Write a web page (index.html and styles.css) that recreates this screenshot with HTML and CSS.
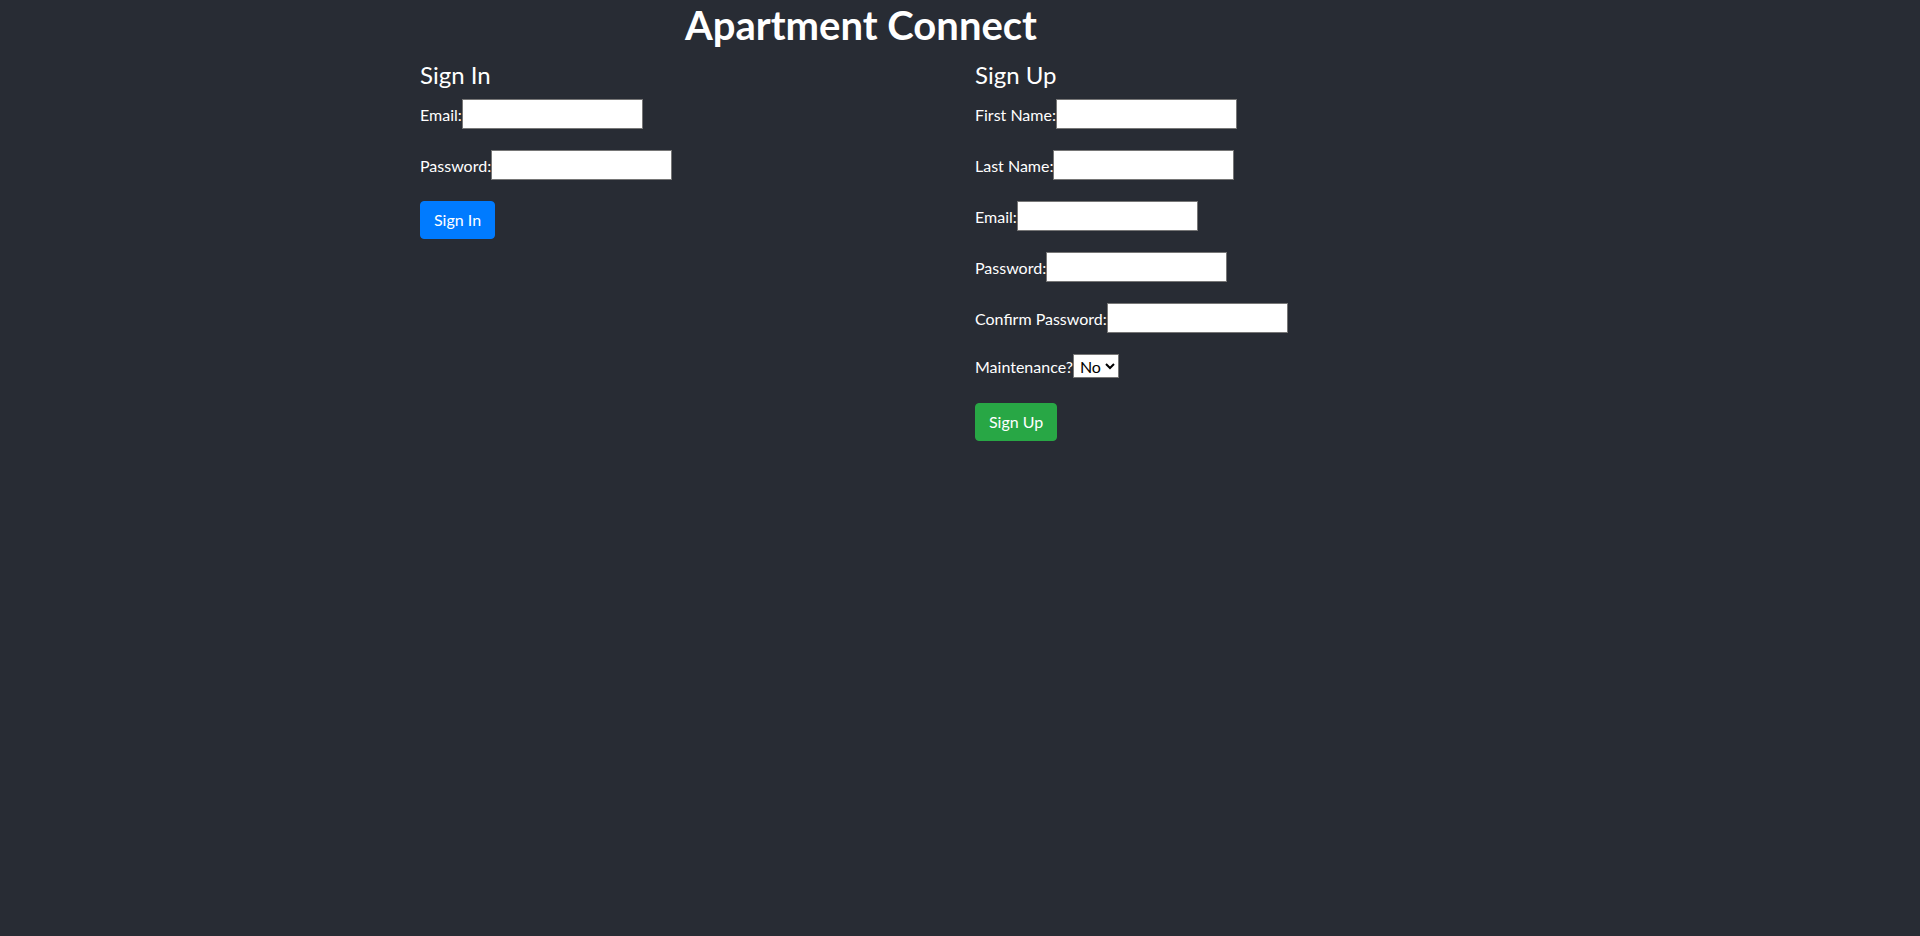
FILE: index.html
```html
<!DOCTYPE html>
<html lang="en">
<head>
<meta charset="utf-8">
<title>Apartment Connect</title>
<link rel="stylesheet" href="styles.css">
</head>
<body>
<div class="app">
  <h1 class="title">Apartment Connect</h1>
  <div class="columns">
    <form class="col col-left">
      <h4 class="heading">Sign In</h4>
      <div class="row"><label class="label">Email:</label><input class="field" type="email"></div>
      <div class="row"><label class="label">Password:</label><input class="field" type="password"></div>
      <button type="button" class="btn btn-blue">Sign In</button>
    </form>
    <form class="col col-right">
      <h4 class="heading">Sign Up</h4>
      <div class="row"><label class="label">First Name:</label><input class="field" type="text"></div>
      <div class="row"><label class="label">Last Name:</label><input class="field" type="text"></div>
      <div class="row"><label class="label">Email:</label><input class="field" type="email"></div>
      <div class="row"><label class="label">Password:</label><input class="field" type="password"></div>
      <div class="row"><label class="label">Confirm Password:</label><input class="field" type="password"></div>
      <div class="row row-select"><label class="label">Maintenance?</label><select class="choice"><option>No</option><option>Yes</option></select></div>
      <button type="button" class="btn btn-green">Sign Up</button>
    </form>
  </div>
</div>
</body>
</html>
```

FILE: styles.css
```css
html, body {
  margin: 0;
  padding: 0;
}
body {
  background: #282c34;
  color: #ffffff;
  font-family: Lato, "Open Sans", sans-serif;
  font-size: 16px;
  min-height: 936px;
}
.app {
  padding-left: 420px;
}
.title {
  width: 882px;
  margin: 0;
  padding-top: 4px;
  text-align: center;
  font-size: 40px;
  font-weight: 700;
  line-height: 42px;
}
.columns {
  display: flex;
  padding-top: 14px;
}
.col {
  display: flex;
  flex-direction: column;
  align-items: flex-start;
  margin: 0;
}
.col-left {
  width: 555px;
}
.heading {
  margin: 0 0 10px 0;
  font-size: 24px;
  font-weight: 400;
  line-height: 29px;
}
.row {
  display: flex;
  align-items: center;
  height: 30px;
  margin-bottom: 21px;
}
.row-select {
  height: 24px;
  margin-bottom: 25px;
}
.label {
  white-space: nowrap;
}
.field {
  box-sizing: border-box;
  width: 181px;
  height: 30px;
  margin: 0;
  padding: 1px 2px;
  border: 1px solid #767676;
  background: #ffffff;
  font: inherit;
}
.choice {
  box-sizing: border-box;
  width: 46px;
  height: 24px;
  margin: 0;
  padding: 0 0 0 2px;
  border: 1px solid #767676;
  background: #ffffff;
  color: #000000;
  font-family: inherit;
  font-size: 16px;
}
.btn {
  box-sizing: border-box;
  height: 38px;
  padding: 0 13px;
  border: 1px solid transparent;
  border-radius: 4px;
  color: #ffffff;
  font-family: inherit;
  font-size: 16px;
  line-height: 24px;
  cursor: pointer;
}
.btn-blue {
  background: #007bff;
  border-color: #007bff;
}
.btn-green {
  background: #28a745;
  border-color: #28a745;
}
```
